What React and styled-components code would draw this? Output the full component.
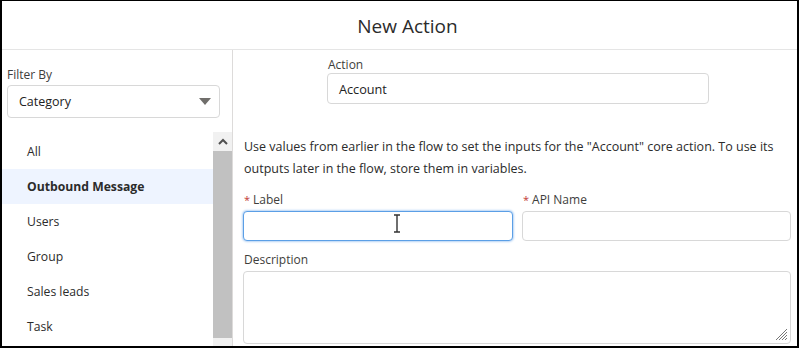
import React from "react";
import styled, { createGlobalStyle } from "styled-components";

const Global = createGlobalStyle`
  html, body { margin: 0; padding: 0; background: #fff; }
  body { font-family: "Open Sans", "Noto Sans", Arial, sans-serif; color: #3e3e3c; }
  * { box-sizing: border-box; }
`;

const Frame = styled.div`
  width: 799px;
  height: 348px;
  border: 2px solid #000;
  border-top-width: 1px;
  display: flex;
  flex-direction: column;
  overflow: hidden;
  background: #fff;
`;

const Header = styled.header`
  height: 49px;
  flex: none;
  display: flex;
  align-items: center;
  justify-content: center;
  border-bottom: 1px solid #e5e5e5;
  font-size: 19px;
  color: #2b2b2b;
  padding: 1px 0 0 16px;
`;

const Body = styled.div`
  flex: 1;
  display: flex;
  min-height: 0;
`;

const Sidebar = styled.aside`
  width: 231px;
  flex: none;
  border-right: 1px solid #dddbda;
  display: flex;
  flex-direction: column;
`;

const FilterBlock = styled.div`
  padding: 17px 12px 14px 5px;
`;

const SmallLabel = styled.div`
  font-size: 12px;
  color: #3e3e3c;
  line-height: 16px;
  margin-bottom: ${(p) => (p.$gap != null ? p.$gap : 3)}px;
  padding-left: ${(p) => p.$indent || 0}px;
`;

const Select = styled.div`
  height: 33px;
  border: 1px solid #d8d8d8;
  border-radius: 4px;
  display: flex;
  align-items: center;
  justify-content: space-between;
  padding: 0 8px 0 11px;
  font-size: 12.5px;
  color: #222;
`;

const Caret = styled.span`
  width: 0;
  height: 0;
  border-left: 6px solid transparent;
  border-right: 6px solid transparent;
  border-top: 7px solid #706e6b;
`;

const ListArea = styled.div`
  flex: 1;
  display: flex;
  min-height: 0;
`;

const List = styled.ul`
  list-style: none;
  margin: 0;
  padding: 2px 0 0;
  flex: 1;
`;

const Item = styled.li`
  height: 35px;
  display: flex;
  align-items: center;
  padding-left: 25px;
  font-size: 12.2px;
  color: #2b2b2b;
  background: ${(p) => (p.$active ? "#eef4ff" : "transparent")};
  font-weight: ${(p) => (p.$active ? 700 : 400)};
`;

const Scrollbar = styled.div`
  width: 19px;
  flex: none;
  background: #f1f1f1;
  display: flex;
  flex-direction: column;
`;

const ScrollArrow = styled.div`
  height: 19px;
  display: flex;
  align-items: center;
  justify-content: center;
`;

const Thumb = styled.div`
  flex: 1;
  background: #c1c1c1;
  margin-bottom: 8px;
`;

const Main = styled.main`
  flex: 1;
  padding: 7px 6px 0 10px;
  display: flex;
  flex-direction: column;
`;

const ActionBlock = styled.div`
  padding-left: 84px;
  width: 466px;
`;

const Input = styled.div`
  position: relative;
  height: ${(p) => p.$h || 30}px;
  border: 1px solid ${(p) => (p.$focus ? "#5b9fe6" : "#d8d8d8")};
  box-shadow: ${(p) => (p.$focus ? "0 0 2px 1px #b7d4f5" : "none")};
  border-radius: 4px;
  display: flex;
  align-items: center;
  padding-left: 11px;
  font-size: 12.7px;
  color: #222;
  background: #fff;
`;

const Para = styled.p`
  margin: 32px 0 0 1px;
  font-size: 12.5px;
  line-height: 22px;
  color: #2b2b2b;
`;

const Row = styled.div`
  display: grid;
  grid-template-columns: 270px 1fr;
  gap: 9px;
  margin-top: 12px;
`;

const Req = styled.span`
  color: #c23934;
  margin-right: 3px;
  font-size: 11px;
`;

const Desc = styled.div`
  margin-top: 11px;
`;

const Cursor = styled.svg`
  position: absolute;
  left: 149px;
  top: 2px;
`;

const Grip = styled.svg`
  position: absolute;
  right: 2px;
  bottom: 2px;
`;

export default function App() {
  const cats = ["All", "Outbound Message", "Users", "Group", "Sales leads", "Task"];
  return (
    <>
      <Global />
      <Frame>
        <Header>New Action</Header>
        <Body>
          <Sidebar>
            <FilterBlock>
              <SmallLabel $gap={2}>Filter By</SmallLabel>
              <Select>
                Category
                <Caret />
              </Select>
            </FilterBlock>
            <ListArea>
              <List>
                {cats.map((c) => (
                  <Item key={c} $active={c === "Outbound Message"}>{c}</Item>
                ))}
              </List>
              <Scrollbar>
                <ScrollArrow>
                  <svg width="10" height="7" viewBox="0 0 10 7">
                    <path d="M1 6 L5 2 L9 6" stroke="#505050" strokeWidth="2" fill="none" />
                  </svg>
                </ScrollArrow>
                <Thumb />
              </Scrollbar>
            </ListArea>
          </Sidebar>
          <Main>
            <ActionBlock>
              <SmallLabel $indent={1} $gap={0}>Action</SmallLabel>
              <Input $h={31}>Account</Input>
            </ActionBlock>
            <Para>
              Use values from earlier in the flow to set the inputs for the "Account" core action. To use its outputs later in the flow, store them in variables.
            </Para>
            <Row>
              <div>
                <SmallLabel $indent={1}><Req>*</Req>Label</SmallLabel>
                <Input $focus>
                  <Cursor width="8" height="19" viewBox="0 0 8 19">
                    <path d="M1 1 H7 M4 1 V18 M1 18 H7" stroke="#333" strokeWidth="1.4" fill="none" />
                  </Cursor>
                </Input>
              </div>
              <div>
                <SmallLabel $indent={1}><Req>*</Req>API Name</SmallLabel>
                <Input />
              </div>
            </Row>
            <Desc>
              <SmallLabel $indent={1}>Description</SmallLabel>
              <Input $h={73}>
                <Grip width="12" height="12" viewBox="0 0 12 12">
                  <path d="M11 3 L3 11 M11 6 L6 11 M11 9 L9 11 M11 0 L0 11" stroke="#777" strokeWidth="1" />
                </Grip>
              </Input>
            </Desc>
          </Main>
        </Body>
      </Frame>
    </>
  );
}
